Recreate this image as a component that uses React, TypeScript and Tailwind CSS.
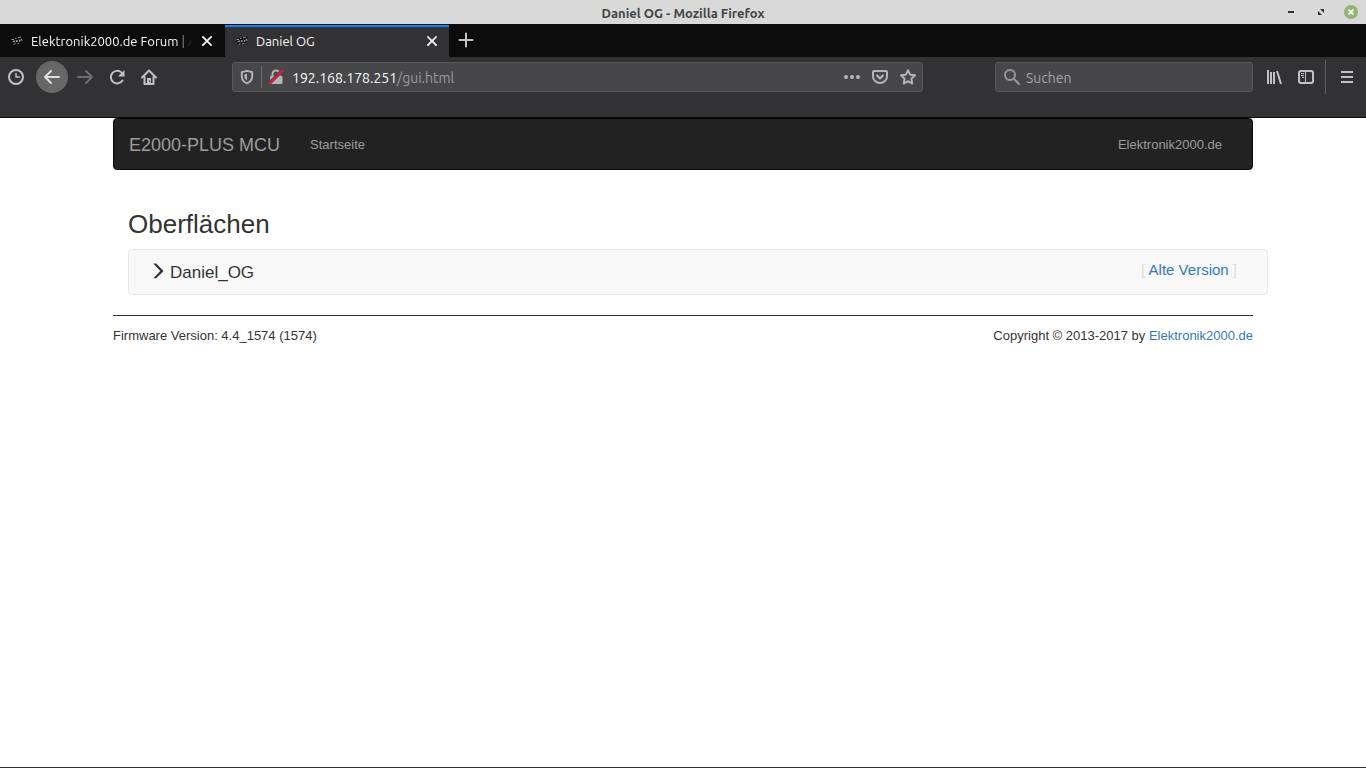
import React from "react";

const uiFont = "font-['Ubuntu','Noto_Sans',sans-serif]";

function Icon({ size = 16, className = "", children }: { size?: number; className?: string; children: React.ReactNode }) {
  return (
    <svg width={size} height={size} viewBox="0 0 16 16" fill="none" stroke="currentColor" strokeWidth="2" strokeLinecap="round" strokeLinejoin="round" className={className} aria-hidden="true">
      {children}
    </svg>
  );
}

function ChipIcon() {
  return (
    <svg width="16" height="16" viewBox="0 0 16 16" className="shrink-0" aria-hidden="true">
      <path d="M2 6 12.5 3l1.700 5.500L4 12z" fill="#050505" />
      <path d="M2.500 6.500h2.500M6 5.400h1.500M9 4.800l3-.9M12.300 5.500l1 2.700M9.800 6.500l1.800 1.800M10.200 9l1.200-2.400M7 7l1.500 2.200M6.800 9.400l1.600-2.200M3.500 8.800l1.600-.5M4.500 11.300l2-.6M8.600 10.600l1.400-.4M5.200 7.200v2.200" stroke="#b4b4b4" strokeWidth=".9" />
    </svg>
  );
}

function CloseIcon() {
  return (
    <Icon size={12}>
      <path d="M2.500 2.500l11 11M13.500 2.500l-11 11" strokeWidth="2.400" />
    </Icon>
  );
}

function TitleBar() {
  return (
    <header className="flex h-6 items-center bg-[#d9d9d9] px-2">
      <div className="flex-1" />
      <h1 className="pt-0.5 text-[13px] leading-5 font-bold text-[#454545]">Daniel OG - Mozilla Firefox</h1>
      <div className="flex flex-1 items-center justify-end gap-4 text-[#303030]">
        <button aria-label="Minimieren" className="flex h-4 w-3.5 items-center justify-center">
          <span className="h-0.5 w-1.5 bg-[#303030]" />
        </button>
        <button aria-label="Maximieren" className="flex h-4 w-3.5 items-center justify-center">
          <svg width="6" height="6" viewBox="0 0 6 6" fill="currentColor" aria-hidden="true">
            <path d="M2 0h4v4zM0 2v4h4z" />
          </svg>
        </button>
        <button aria-label="Schließen" className="flex size-3.5 items-center justify-center rounded-full bg-[#92b372] text-white">
          <svg width="6" height="6" viewBox="0 0 6 6" stroke="currentColor" strokeWidth="1.800" aria-hidden="true">
            <path d="M.5.5l5 5M5.500.5l-5 5" />
          </svg>
        </button>
      </div>
    </header>
  );
}

function TabStrip() {
  return (
    <div role="tablist" className="flex h-[33px] bg-[#0c0c0d] pt-px text-[13px] text-[#f9f9fa]">
      <div className="flex w-[225px] items-center gap-1.5 pr-3 pl-[9px]">
        <ChipIcon />
        <button role="tab" aria-selected="false" className="min-w-0 flex-1 mask-r-from-88% mask-r-to-98% pt-0.5 text-left whitespace-nowrap">
          Elektronik2000.de Forum | A
        </button>
        <button aria-label="Tab schließen"><CloseIcon /></button>
      </div>
      <div className="flex w-56 items-center gap-1.5 bg-[#323234] pr-[11px] pl-[9px] shadow-[inset_0_2px_#0a84ff]">
        <ChipIcon />
        <button role="tab" aria-selected="true" className="flex-1 pt-0.5 text-left">Daniel OG</button>
        <button aria-label="Tab schließen"><CloseIcon /></button>
      </div>
      <button aria-label="Neuer Tab" className="px-[9px] pb-0.5 text-[#c4c4c4]">
        <Icon>
          <path d="M8 1.500v13M1.500 8h13" />
        </Icon>
      </button>
    </div>
  );
}

function Toolbar() {
  return (
    <nav aria-label="Browser" className="h-[61px] border-b border-[#0c0c0d] bg-[#323234] text-[#c2c2c3]">
      <div className="flex h-10 items-center">
        <div className="flex w-[232px] items-center pl-2">
          <button aria-label="Verlauf">
            <Icon>
              <circle cx="8" cy="8" r="7" />
              <path d="M8 4.500V8h3.500" strokeWidth="1.500" />
            </Icon>
          </button>
          <button aria-label="Zurück" className="ml-3 flex size-8 items-center justify-center rounded-full bg-[#676768] text-[#dedede]">
            <Icon>
              <path d="M15 8H1.500M7 2L1 8l6 6" />
            </Icon>
          </button>
          <button aria-label="Vor" className="ml-[9px] text-[#6f6f70]">
            <Icon>
              <path d="M1 8h13.500M9 2l6 6-6 6" />
            </Icon>
          </button>
          <button aria-label="Neu laden" className="ml-4">
            <Icon>
              <path d="M13.500 11.500A6.300 6.300 0 1 1 12.500 3.600" />
              <path d="M15.500 1v6.500H9z" fill="currentColor" stroke="none" />
            </Icon>
          </button>
          <button aria-label="Startseite" className="ml-4">
            <Icon>
              <path d="M1 8.500l7-7 7 7" />
              <path d="M3.500 8v7h9V8" />
              <path d="M6 15V9h4v6z" fill="currentColor" stroke="none" />
              <path d="M8.500 11.500v1.500" stroke="#323234" strokeWidth="1" strokeLinecap="butt" />
            </Icon>
          </button>
        </div>
        <div className="flex h-[30px] flex-1 items-center rounded-[3px] border border-[#59595b] bg-[#474749] px-1.5 text-[#b6b6b7]">
          <button aria-label="Schutz">
            <Icon>
              <path d="M8 1.800l5.200 1.300v4.200C13.200 11 11 13.200 8 14.400 5 13.200 2.800 11 2.800 7.300V3.100z" strokeWidth="1.900" />
              <path d="M8 4.700v6.800C6.300 10.500 5.500 9 5.500 7.300V5.200z" fill="currentColor" stroke="none" />
            </Icon>
          </button>
          <span className="mr-1.5 ml-1.5 h-[22px] w-px bg-[#6b6b6d]" />
          <button aria-label="Verbindung nicht sicher">
            <Icon>
              <path d="M4.500 7V5a3.500 3.500 0 0 1 7 0v2" />
              <rect x="2" y="7" width="12.500" height="8" rx="1" fill="currentColor" stroke="none" />
              <path d="M1 14.500L14.500 1.500" stroke="#474749" strokeWidth="3.600" strokeLinecap="butt" />
              <path d="M1.500 14.200L14.500 1.500" stroke="#f0123f" strokeWidth="2" />
            </Icon>
          </button>
          <div className="relative ml-2 flex h-6 min-w-0 flex-1 items-center pt-0.5 text-[14px]">
            <input aria-label="Adresse" defaultValue="192.168.178.251/gui.html" className="absolute inset-0 w-full bg-transparent text-transparent caret-white outline-none" />
            <span aria-hidden="true" className="pointer-events-none text-[#9a9a9b]">
              <span className="text-[#f9f9fa]">192.168.178.251</span>/gui.html
            </span>
          </div>
          <div className="flex gap-3">
            <button aria-label="Seitenaktionen">
              <Icon>
                <g fill="currentColor" stroke="none">
                  <circle cx="2" cy="8" r="2" /><circle cx="8" cy="8" r="2" /><circle cx="14" cy="8" r="2" />
                </g>
              </Icon>
            </button>
            <button aria-label="Pocket">
              <Icon>
                <path d="M2 2h12a1 1 0 0 1 1 1v4.500a7 6.500 0 0 1-14 0V3a1 1 0 0 1 1-1z" />
                <path d="M5 6.500l3 3 3-3" />
              </Icon>
            </button>
            <button aria-label="Lesezeichen">
              <Icon>
                <path d="M8 1.200l2.100 4.500 4.900.6-3.600 3.400.9 4.900L8 12.200l-4.300 2.400.9-4.900L1 6.300l4.900-.6z" strokeWidth="1.900" />
              </Icon>
            </button>
          </div>
        </div>
        <label className="ml-[72px] flex h-[30px] w-[258px] items-center gap-1.5 rounded-[3px] border border-[#59595b] bg-[#474749] px-2 text-[#98989a]">
          <Icon>
            <circle cx="6" cy="6" r="5" />
            <path d="M10 10l5 5" />
          </Icon>
          <input aria-label="Suchen" placeholder="Suchen" className="min-w-0 flex-1 bg-transparent pt-0.5 text-[14px] placeholder-[#a5a5a7] outline-none" />
        </label>
        <button aria-label="Bibliothek" className="ml-[13px]">
          <Icon>
            <path d="M2 1v14M5 3v12M8 3v12M11 2l4 13" strokeLinecap="butt" />
          </Icon>
        </button>
        <button aria-label="Seitenleiste" className="ml-4">
          <Icon>
            <rect x="1" y="2" width="14" height="12" rx="2" />
            <path d="M7.500 2v12M3 4.500h3M3 6.500h3M4 8.500h2" strokeWidth="1" strokeLinecap="butt" />
          </Icon>
        </button>
        <span className="ml-[11px] h-[34px] w-px bg-[#606062]" />
        <button aria-label="Menü" className="mr-[11px] ml-[13px]">
          <Icon>
            <path d="M2 3h12M2 8h12M2 13h12" strokeLinecap="butt" />
          </Icon>
        </button>
      </div>
    </nav>
  );
}

export default function App() {
  return (
    <div className={`flex min-h-screen flex-col border-b border-[#323234] bg-white ${uiFont}`}>
      <TitleBar />
      <TabStrip />
      <Toolbar />
      <div className="mx-auto w-full max-w-[1140px] font-['Liberation_Sans',Arial,sans-serif] text-[13px] leading-[18px] text-[#333]">
        <nav aria-label="Hauptnavigation" className="flex h-[52px] items-center rounded-[4px] border border-[#080808] bg-[#222] px-[15px] pt-0.5 text-[#9d9d9d]">
          <a href="#" className="text-[18px] leading-5">E2000-PLUS MCU</a>
          <a href="#" className="ml-[30px]">Startseite</a>
          <a href="#" className="mr-[15px] ml-auto">Elektronik2000.de</a>
        </nav>
        <main className="mt-10 -mr-[15px] ml-[15px]">
          <h2 className="text-[26px] leading-7">Oberflächen</h2>
          <section className="mt-[11px] flex h-[46px] items-center justify-between rounded-[4px] border border-[#e7e7e7] bg-[#f8f8f8] pr-[30px] pl-6">
            <button className="flex items-start gap-[5px] pt-0.5 text-[17px] leading-6">
              <svg width="12" height="20" viewBox="0 0 12 20" fill="currentColor" aria-hidden="true">
                <path d="M0.200 2.500h3L10.600 10l-7.400 7.200H.4L7.300 10z" />
              </svg>
              Daniel_OG
            </button>
            <span className="pb-1 text-[15px] leading-5 text-[#ddd]">
              [ <a href="#" className="text-[#337ab7]">Alte Version</a> ]
            </span>
          </section>
        </main>
        <footer className="mt-5 flex justify-between border-t border-[#333] pt-[11px]">
          <p>Firmware Version: 4.4_1574 (1574)</p>
          <p>Copyright © 2013-2017 by <a href="#" className="text-[#337ab7]">Elektronik2000.de</a></p>
        </footer>
      </div>
    </div>
  );
}
